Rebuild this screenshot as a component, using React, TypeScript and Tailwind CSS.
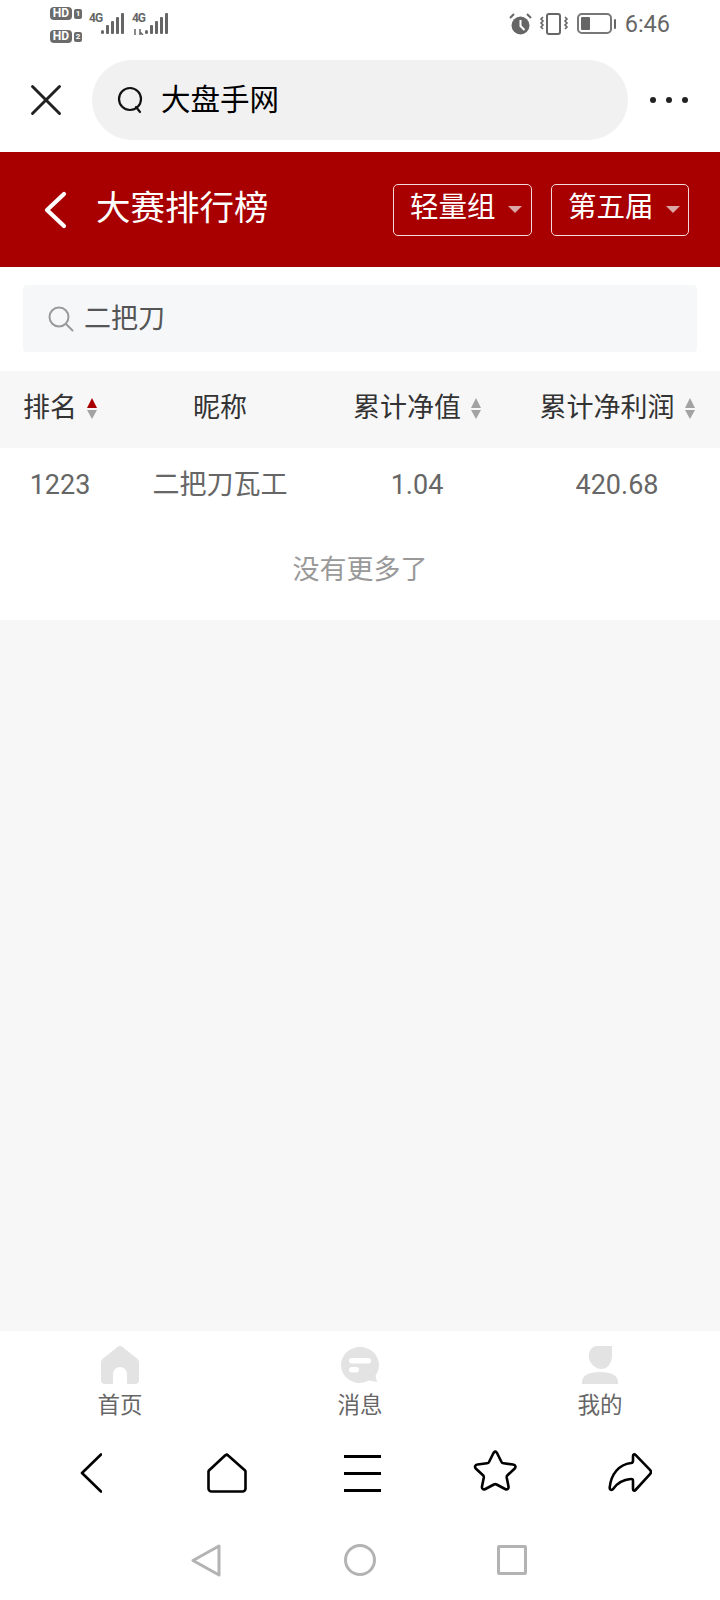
import { X } from "lucide-react";

const cjk = "font-['Roboto','Noto_Sans_CJK_SC',sans-serif]";

function HdBadge({ n }: { n: string }) {
    return (
        <div className="flex items-center gap-[2px]">
            <span className="w-[22px] h-[13px] rounded-[4px] bg-[#6b6b6b] text-white text-[12px] leading-[13px] font-bold text-center">HD</span>
            <span className="w-[8px] h-[10px] rounded-[2px] bg-[#6b6b6b] text-white text-[8px] leading-[10px] font-bold text-center">{n}</span>
        </div>
    );
}

function Bars() {
    return (
        <svg width="23" height="22" viewBox="0 0 23 22" fill="#666">
            <rect x="0" y="17" width="3" height="4" rx="1.5" />
            <rect x="5" y="12" width="3" height="9" rx="1" />
            <rect x="10" y="8" width="3" height="13" rx="1" />
            <rect x="15" y="4" width="3" height="17" rx="1" />
            <rect x="20" y="0" width="3" height="21" rx="1" />
        </svg>
    );
}

function StatusBar() {
    return (
        <div className="h-[50px] flex justify-between pl-[50px] pr-[50px]">
            <div className="flex">
                <div className="flex flex-col gap-[10px] pt-[7px]">
                    <HdBadge n="1" />
                    <HdBadge n="2" />
                </div>
                <div className="flex pt-[13px] ml-[7px]">
                    <span className="w-[12px] text-[12px] leading-[11px] tracking-[-1px] font-bold text-[#666]">4G</span>
                    <Bars />
                </div>
                <div className="flex pt-[13px] ml-[8px]">
                    <div className="flex flex-col items-center w-[13px]">
                        <span className="text-[12px] leading-[11px] tracking-[-1px] font-bold text-[#666]">4G</span>
                        <svg width="12" height="6" viewBox="0 0 12 6" fill="none" stroke="#666" strokeWidth="1.5" className="mt-[5px]">
                            <path d="M2 0v6M7 0v6M7 3l3 3" />
                        </svg>
                    </div>
                    <Bars />
                </div>
            </div>
            <div className="flex items-start pt-[13px]">
                {/* alarm clock */}
                <svg width="23" height="22" viewBox="0 0 23 22" fill="#666">
                    <circle cx="11.5" cy="12.5" r="9" />
                    <path d="M1 5l4-4M22 5l-4-4" stroke="#666" strokeWidth="2" />
                    <path d="M11.5 7v6l4 4" stroke="#fff" strokeWidth="2" fill="none" />
                </svg>
                {/* vibrate */}
                <svg width="30" height="22" viewBox="0 0 30 22" fill="none" stroke="#666" strokeWidth="2" className="ml-[7px]">
                    <rect x="8" y="1" width="13" height="20" rx="2" />
                    <path d="M4 4l-2 2 2 2-2 2 2 2-2 2 2 2M26 4l2 2-2 2 2 2-2 2 2 2-2 2" strokeWidth="1.6" />
                </svg>
                {/* battery */}
                <div className="ml-[8px] flex items-center h-[21px]">
                    <div className="w-[35px] h-[21px] rounded-[5px] border-2 border-[#777] p-[2px]">
                        <div className="w-[9px] h-full rounded-[1px] bg-[#666]" />
                    </div>
                    <div className="w-[2px] h-[10px] ml-[2px] bg-[#666] rounded-[1px]" />
                </div>
                <span className="ml-[9px] text-[23.5px] leading-[22px] text-[#666]">6:46</span>
            </div>
        </div>
    );
}

function TopBar() {
    return (
        <div className="h-[100px] mb-[2px] flex items-center">
            <div className="w-[92px] flex justify-center">
                <X size={54} strokeWidth={1.3} className="text-[#222]" />
            </div>
            <div className="w-[536px] h-[80px] rounded-[40px] bg-[#f1f1f1] flex items-center pl-[25px]">
                <svg width="26" height="28" viewBox="0 0 26 28" fill="none" stroke="#111" strokeWidth="2.2" strokeLinecap="round">
                    <circle cx="13" cy="13" r="11" />
                    <path d="M19 21l4 5" />
                </svg>
                <span className="ml-[18px] text-[29.5px] text-black">大盘手网</span>
            </div>
            <div className="flex-1 flex gap-[10px] pl-[22px]">
                <span className="w-[6px] h-[6px] rounded-full bg-[#222]" />
                <span className="w-[6px] h-[6px] rounded-full bg-[#222]" />
                <span className="w-[6px] h-[6px] rounded-full bg-[#222]" />
            </div>
        </div>
    );
}

function Picker({ label, className }: { label: string; className: string }) {
    return (
        <div className={`h-[52px] border border-[#f3d9d9] rounded-[5px] flex items-center pl-[16px] ${className}`}>
            <span className="text-[28.5px] text-white pb-[3px]">{label}</span>
            <span className="ml-[12px] w-0 h-0 border-x-[7px] border-x-transparent border-t-[7px] border-t-[#dba6a6]" />
        </div>
    );
}

function RedHeader() {
    return (
        <div className="h-[115px] bg-[#a80000] flex items-center">
            <svg width="24" height="38" viewBox="0 0 24 38" fill="none" stroke="#fff" strokeWidth="4.200" strokeLinecap="round" strokeLinejoin="round" className="ml-[43px]">
                <path d="M21 3L4 19l17 16" />
            </svg>
            <h1 className="ml-[29px] text-[34.5px] text-white font-normal pb-[1px]">大赛排行榜</h1>
            <div className="ml-auto mr-[31px] flex gap-[19px]">
                <Picker label="轻量组" className="w-[139px]" />
                <Picker label="第五届" className="w-[138px] pl-[15px]" />
            </div>
        </div>
    );
}

function SortArrows({ active }: { active?: boolean }) {
    return (
        <span className="ml-[10px] flex flex-col gap-[2px]">
            <span className={`w-0 h-0 border-x-[5px] border-x-transparent border-b-[10px] ${active ? "border-b-[#a80000]" : "border-b-[#a3a3a3]"}`} />
            <span className="w-0 h-0 border-x-[5px] border-x-transparent border-t-[9px] border-t-[#a3a3a3]" />
        </span>
    );
}

function Table() {
    const cols = "grid grid-cols-[120px_200px_194px_206px] items-center justify-items-center";
    return (
        <div>
            <div className={`${cols} h-[77px] bg-[#f7f7f7] text-[27px] text-[#333]`}>
                <div className="flex items-center pb-[2px]"><span>排名</span><SortArrows active /></div>
                <div className="pb-[2px]">昵称</div>
                <div className="flex items-center pb-[2px]"><span>累计净值</span><SortArrows /></div>
                <div className="flex items-center pb-[2px]"><span>累计净利润</span><SortArrows /></div>
            </div>
            <div className={`${cols} h-[77px] pb-[2px] text-[27px] text-[#666]`}>
                <div>1223</div>
                <div>二把刀瓦工</div>
                <div>1.04</div>
                <div>420.68</div>
            </div>
            <div className="h-[95px] pb-[5px] flex items-center justify-center text-[27px] text-[#999]">没有更多了</div>
        </div>
    );
}

function TabBar() {
    return (
        <div className="h-[94px] grid grid-cols-3 justify-items-center pt-[15px] text-[22.5px] leading-[32px] text-[#666]">
            <div className="flex flex-col items-center">
                <svg width="38" height="38" viewBox="0 0 38 38" fill="#e3e3e3">
                    <path d="M16.5 1a4 4 0 0 1 5 0L36 12.5a5 5 0 0 1 2 4V34a4 4 0 0 1-4 4h-8V28a7 7 0 0 0-14 0v10H4a4 4 0 0 1-4-4V16.500a5 5 0 0 1 2-4z" />
                </svg>
                <span className="mt-[5px]">首页</span>
            </div>
            <div className="flex flex-col items-center">
                <svg width="40" height="38" viewBox="0 0 40 38" fill="#e3e3e3">
                    <path d="M20 1c10.500 0 19 8 19 18 0 4-1.300 7.500-3.500 10.500L37 36l-8-1.500A20 20 0 0 1 20 37C9.500 37 1 29 1 19S9.500 1 20 1z" />
                    <rect x="9" y="12" width="22" height="5.500" rx="2.700" fill="#fff" />
                    <rect x="9" y="21" width="10" height="5.500" rx="2.700" fill="#fff" />
                </svg>
                <span className="mt-[5px]">消息</span>
            </div>
            <div className="flex flex-col items-center">
                <svg width="36" height="38" viewBox="0 0 36 38" fill="#e3e3e3">
                    <path d="M14 0h16v9c0 8-4.500 14-10.500 14S8 18 7 12 9 1 14 0z" />
                    <path d="M0 38v-2c0-6 6-10 18-10s18 4 18 10v2z" />
                </svg>
                <span className="mt-[5px]">我的</span>
            </div>
        </div>
    );
}

function BrowserBar() {
    return (
        <div className="h-[100px] flex items-start pt-[25px] pl-[80px]">
            <svg width="22" height="40" viewBox="0 0 22 40" fill="none" stroke="#000" strokeWidth="2.600" strokeLinecap="round" strokeLinejoin="round" className="mt-[3px]">
                <path d="M21 1.500L2 20l19 18.500" />
            </svg>
            <svg width="40" height="40" viewBox="0 0 40 40" fill="none" stroke="#000" strokeWidth="2.600" strokeLinejoin="round" className="mt-[3px] ml-[105px]">
                <path d="M20 1.500L37.500 17a2 2 0 0 1 1 2v16.500a3 3 0 0 1-3 3h-31a3 3 0 0 1-3-3V19a2 2 0 0 1 1-2L18 2.500z" />
            </svg>
            <div className="flex flex-col gap-[14px] w-[37px] mt-[5px] ml-[97px]">
                <div className="h-[3px] bg-black" />
                <div className="h-[3px] bg-black" />
                <div className="h-[3px] bg-black" />
            </div>
            <svg width="44" height="42" viewBox="0 0 44 42" fill="none" stroke="#000" strokeWidth="2.600" strokeLinejoin="round" className="ml-[92px]">
                <path d="M22 1.500c1 0 1.500.6 2 1.500l4.500 9c.4.800 1 1.200 2 1.300l9.500 1.200c2.500.3 3.300 2.500 1.500 4.200l-7 6.500c-.7.700-.9 1.300-.8 2.300l1.800 9c.4 2.300-1.300 3.600-3.400 2.500l-8.500-4.500c-1-.5-1.700-.5-2.700 0l-8.500 4.500c-2.100 1.100-3.800-.2-3.400-2.500l1.800-9c.1-1-.1-1.600-.8-2.300l-7-6.500c-1.800-1.700-1-3.900 1.500-4.200l9.500-1.200c1-.1 1.600-.5 2-1.300l4.500-9c.5-.9 1-1.500 2-1.500z" />
            </svg>
            <svg width="44" height="40" viewBox="0 0 44 40" fill="none" stroke="#000" strokeWidth="2.600" strokeLinejoin="round" className="mt-[3px] ml-[91px]">
                <path d="M25 3c0-1.600 1.400-2.200 2.500-1.100l14.500 15a3 3 0 0 1 0 4.200L27.500 37c-1.100 1.100-2.500.5-2.500-1.100V28c0-1.500-.8-2.200-2.500-2-7 .6-13 4-17 9.500-1.600 2.200-4 1.700-3.800-1C3 21 11 11.500 23 10c1.300-.2 2-.8 2-2z" />
            </svg>
        </div>
    );
}

function NavBar() {
    return (
        <div className="h-[75px] flex items-start pt-[19px] pl-[191px]">
            <svg width="30" height="33" viewBox="0 0 30 33" fill="none" stroke="#b3b3b3" strokeWidth="3" strokeLinejoin="round">
                <path d="M28 2L2 16.500 28 31z" />
            </svg>
            <div className="ml-[123px] w-[32px] h-[32px] rounded-full border-[3px] border-[#b3b3b3]" />
            <div className="ml-[121px] mt-[1px] w-[30px] h-[30px] rounded-[2px] border-[3px] border-[#b3b3b3]" />
        </div>
    );
}

export default function App() {
    return (
        <div className={`w-[720px] h-[1600px] flex flex-col bg-white overflow-hidden ${cjk}`}>
            <StatusBar />
            <TopBar />
            <RedHeader />
            <div className="h-[104px] px-[23px] pt-[18px]">
                <div className="h-[67px] rounded-[4px] bg-[#f6f7f9] flex items-center pl-[25px]">
                    <svg width="26" height="26" viewBox="0 0 26 26" fill="none" stroke="#999" strokeWidth="2" strokeLinecap="round">
                        <circle cx="11" cy="11" r="9.500" />
                        <path d="M18 18l6.500 6.500" />
                    </svg>
                    <span className="ml-[10px] pt-[1px] text-[27px] text-[#555]">二把刀</span>
                </div>
            </div>
            <Table />
            <div className="flex-1 bg-[#f7f7f7]" />
            <TabBar />
            <BrowserBar />
            <NavBar />
        </div>
    );
}
